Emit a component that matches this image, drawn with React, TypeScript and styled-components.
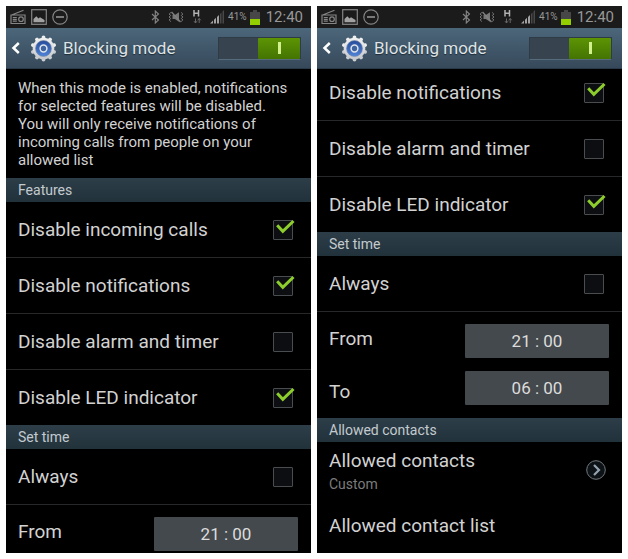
import React, { useState } from "react";
import styled, { createGlobalStyle } from "styled-components";

const GlobalStyle = createGlobalStyle`
  * { box-sizing: border-box; }
  body { margin: 0; background: #fff; font-family: Roboto, "Noto Sans", sans-serif; }
  button, input { font: inherit; color: inherit; }
`;

const Page = styled.main`
  display: grid;
  grid-template-columns: 1fr 1fr;
  gap: 6px;
  height: 100vh;
  padding: 6px;
`;

const Phone = styled.section`
  display: flex;
  flex-direction: column;
  min-width: 0;
  min-height: 0;
  overflow: hidden;
  background: #000;
  color: #d2d2d2;
`;

const StatusBar = styled.div`
  display: flex;
  flex: none;
  align-items: center;
  justify-content: space-between;
  height: 22px;
  padding: 0 8px 0 4px;
  background: #1b1b1b;
  color: #989898;
`;

const StatusGroup = styled.div<{ $gap: number }>`
  display: flex;
  align-items: center;
  gap: ${(p) => p.$gap}px;

  svg { display: block; }
`;

const Percent = styled.span`
  font-size: 10px;
  line-height: 16px;
`;

const Clock = styled.span`
  padding-left: 3px;
  font-size: 15px;
  line-height: 20px;
`;

const TitleBar = styled.header`
  display: flex;
  flex: none;
  align-items: center;
  height: 41px;
  padding: 0 10px 0 5px;
  background: linear-gradient(#4c667a, #36495a);
  border-bottom: 1px solid #2b3a48;
`;

const BackButton = styled.button`
  display: flex;
  align-items: center;
  gap: 10px;
  padding: 0;
  border: 0;
  background: none;
`;

const Title = styled.h1`
  flex: 1;
  margin: 0;
  padding-left: 6px;
  color: #dfe3e6;
  font-size: 17px;
  font-weight: 400;
  line-height: 24px;
  text-shadow: 0 1px 1px #1d2a35;
  white-space: nowrap;
`;

const Switch = styled.button<{ $on: boolean }>`
  display: flex;
  justify-content: ${(p) => (p.$on ? "flex-end" : "flex-start")};
  width: 83px;
  height: 23px;
  padding: 0;
  border: 1px solid #2f3b46;
  border-bottom-color: #566b7b;
  background: #37434e;
`;

const Knob = styled.span<{ $on: boolean }>`
  display: flex;
  align-items: center;
  justify-content: center;
  width: 42px;
  height: 100%;
  border-radius: 1px;
  background: ${(p) => (p.$on ? "linear-gradient(#5c9404, #447402)" : "#66717a")};

  &::before {
    width: 3px;
    height: 12px;
    background: #d3f08f;
    content: "";
  }
`;

const Body = styled.div<{ $scrolled: boolean }>`
  display: flex;
  flex: 1;
  flex-direction: column;
  justify-content: ${(p) => (p.$scrolled ? "flex-end" : "flex-start")};
  min-height: 0;
  overflow: hidden;

  > * { flex: none; }
`;

const Description = styled.p`
  margin: 0;
  padding: 10px 18px 9px 12px;
  font-size: 15px;
  line-height: 18px;
`;

const SectionTitle = styled.h2`
  height: 24px;
  margin: 0;
  padding: 0 12px;
  background: linear-gradient(#2e3e49, #22323b);
  color: #c3cace;
  font-size: 14px;
  font-weight: 400;
  line-height: 24px;
`;

const List = styled.div`
  > * + * { border-top: 1px solid #26282a; }
`;

const CheckRow = styled.label`
  display: flex;
  align-items: center;
  justify-content: space-between;
  min-height: 55px;
  padding: 0 18px 0 12px;
  font-size: 19px;
  line-height: 24px;

  & + & { min-height: 56px; }
`;

const CheckBox = styled.span`
  position: relative;
  display: flex;

  svg {
    position: absolute;
    top: -1px;
    left: 2px;
    pointer-events: none;
  }
`;

const CheckInput = styled.input`
  width: 20px;
  height: 20px;
  margin: 0;
  appearance: none;
  border: 1px solid #4a4d50;
  border-radius: 1px;
  background: #0c0e11;
`;

const TimeRow = styled.div<{ $last?: boolean }>`
  display: flex;
  align-items: center;
  justify-content: space-between;
  padding: 0 13px 0 12px;
  font-size: 19px;
  line-height: 24px;

  button { margin: ${(p) => (p.$last ? "5px 0 13px" : "12px 0 8px")}; }
`;

const TimeButton = styled.button`
  width: 144px;
  height: 34px;
  padding: 0;
  border: 0;
  border-radius: 1px;
  background: #44494d;
  color: #dcdcdc;
  font-size: 17px;
  line-height: 34px;
`;

const LinkRow = styled.button`
  display: flex;
  align-items: center;
  justify-content: space-between;
  width: 100%;
  min-height: 56px;
  padding: 0 16px 0 12px;
  border: 0;
  background: none;
  font-size: 19px;
  line-height: 24px;
  text-align: left;

  & + & { min-height: 55px; }
`;

const LinkText = styled.span`
  display: flex;
  flex-direction: column;
  padding-top: 4px;
`;

const Detail = styled.span`
  color: #7c7c7c;
  font-size: 14px;
  line-height: 22px;
`;

const TimeGroup = styled.div``;

function RadioIcon() {
  return (
    <svg width="16" height="16" viewBox="0 0 16 16" fill="none" stroke="#858585" strokeWidth="1.2">
      <path d="M1 6.2 13.5 1.2M1 6h14v8.5H1z" />
      <circle cx="11" cy="10.2" r="2.3" />
      <path d="M2.8 8.5h4M2.8 10.3h4M2.8 12.1h4" />
    </svg>
  );
}

function PictureIcon() {
  return (
    <svg width="16" height="16" viewBox="0 0 16 16">
      <rect x="0.7" y="0.7" width="14.6" height="14.6" fill="none" stroke="#858585" strokeWidth="1.2" />
      <path d="M2.5 13.3V10l2.8-2.8 2.2 2.2 1.5-1.2 4.5 2.8v2.3z" fill="#a2a2a2" />
    </svg>
  );
}

function BlockedIcon() {
  return (
    <svg width="16" height="16" viewBox="0 0 16 16" fill="none" stroke="#858585">
      <circle cx="8" cy="8" r="7.2" strokeWidth="1.2" />
      <path d="M4 8h8" strokeWidth="1.8" />
    </svg>
  );
}

function BluetoothIcon() {
  return (
    <svg width="9" height="14" viewBox="0 0 9 14" fill="none" stroke="#858585" strokeWidth="1.1">
      <path d="m1 4 6.5 6L4.3 13V1l3.2 3L1 10" />
    </svg>
  );
}

function VibrateIcon() {
  return (
    <svg width="16" height="12" viewBox="0 0 16 12" fill="none" stroke="#808080">
      <path d="M4.5 4h2.3L11 1.2v9.6L6.8 8H4.5z" fill="#777" stroke="none" />
      <path d="m3.5 1 9 10" strokeWidth="1.3" />
      <path d="M2.8 1.5 1.2 3l1.4 1.5L1.2 6l1.4 1.5L1.2 9l1.6 1.5M13.2 1.5 14.8 3l-1.4 1.5L14.8 6l-1.4 1.5L14.8 9l-1.6 1.5" />
    </svg>
  );
}

function DataIcon() {
  return (
    <svg width="10" height="16" viewBox="0 0 10 16" fill="none">
      <path d="M2 1v6.5M6.5 1v6.5M2 4.2h4.5" stroke="#b2b2b2" strokeWidth="1.5" />
      <path d="M3.5 9.5V14M2 12.2l1.5 1.8L5 12.2M7.2 14V9.5M5.7 11.3l1.5-1.8 1.5 1.8" stroke="#686868" />
    </svg>
  );
}

function SignalIcon() {
  return (
    <svg width="15" height="14" viewBox="0 0 15 14">
      <path d="M0 13.5 3 10.5v3zM4 9.7l2-2v5.8H4zM7 6.9l2-2v8.6H7z" fill="#a2a2a2" />
      <path d="m10 4 1.5-1.5v11H10zM12.5 1.5 14 0v13.5h-1.5z" fill="#484848" />
    </svg>
  );
}

function BatteryIcon() {
  return (
    <svg width="10" height="15" viewBox="0 0 10 15">
      <path d="M3 0h4v2h3v7H0V2h3z" fill="#474747" />
      <path d="M0 9h10v6H0z" fill="#93cf00" />
    </svg>
  );
}

function BackIcon() {
  return (
    <svg width="9" height="14" viewBox="0 0 9 14" fill="none" stroke="#fff" strokeWidth="2.5">
      <path d="M7.8 2 2.5 7l5.3 5" />
    </svg>
  );
}

const TEETH = Array.from({ length: 10 }, (_, i) => i * 36);

function GearIcon() {
  return (
    <svg width="27" height="27" viewBox="0 0 27 27">
      <defs>
        <linearGradient id="rim" x1="0" y1="0" x2="0" y2="1">
          <stop offset="0" stopColor="#f2f2f2" />
          <stop offset="1" stopColor="#c5c8cc" />
        </linearGradient>
        <linearGradient id="disc" x1="0" y1="0" x2="0" y2="1">
          <stop offset="0" stopColor="#274b9b" />
          <stop offset="1" stopColor="#4f84d8" />
        </linearGradient>
      </defs>
      {TEETH.map((angle) => (
        <path
          key={angle}
          d="m11.3 4 .7-3.1q1.5-.8 3 0l.7 3.1z"
          fill={angle > 90 && angle < 270 ? "#c9ccd0" : "#eeeeee"}
          transform={`rotate(${angle} 13.5 13.5)`}
        />
      ))}
      <circle cx="13.5" cy="13.5" r="10.8" fill="url(#rim)" />
      <circle cx="13.5" cy="13.5" r="8" fill="url(#disc)" stroke="#7d8da8" strokeWidth="0.6" />
      <circle cx="13.5" cy="13.5" r="3.4" fill="#3f639f" stroke="#dfe3e8" strokeWidth="1.5" />
    </svg>
  );
}

function CheckIcon() {
  return (
    <svg width="20" height="16" viewBox="0 0 20 16" fill="none" stroke="#8dcd2c" strokeWidth="3">
      <path d="m2.2 6.3 5.6 6L18.5 2" />
    </svg>
  );
}

function OpenIcon() {
  return (
    <svg width="20" height="20" viewBox="0 0 20 20" fill="none">
      <circle cx="10" cy="10" r="9.3" fill="#0d1216" stroke="#73787c" />
      <path d="m8 5 5 5-5 5" stroke="#94a3af" strokeWidth="2.2" />
    </svg>
  );
}

function CheckItem({ label, initial = false }: { label: string; initial?: boolean }) {
  const [checked, setChecked] = useState(initial);
  return (
    <CheckRow>
      {label}
      <CheckBox>
        <CheckInput type="checkbox" checked={checked} onChange={() => setChecked(!checked)} />
        {checked && <CheckIcon />}
      </CheckBox>
    </CheckRow>
  );
}

function TimeItem({ label, time, last }: { label: string; time: string; last?: boolean }) {
  return (
    <TimeRow $last={last}>
      <span>{label}</span>
      <TimeButton type="button" aria-label={`${label} ${time}`}>{time}</TimeButton>
    </TimeRow>
  );
}

function Screen({ scrolled = false, children }: { scrolled?: boolean; children: React.ReactNode }) {
  const [on, setOn] = useState(true);
  return (
    <Phone>
      <StatusBar>
        <StatusGroup $gap={5}>
          <RadioIcon />
          <PictureIcon />
          <BlockedIcon />
        </StatusGroup>
        <StatusGroup $gap={3}>
          <StatusGroup $gap={8}>
            <BluetoothIcon />
            <VibrateIcon />
            <DataIcon />
            <SignalIcon />
          </StatusGroup>
          <Percent>41%</Percent>
          <BatteryIcon />
          <Clock>12:40</Clock>
        </StatusGroup>
      </StatusBar>
      <TitleBar>
        <BackButton type="button" aria-label="Back">
          <BackIcon />
          <GearIcon />
        </BackButton>
        <Title>Blocking mode</Title>
        <Switch type="button" role="switch" aria-checked={on} aria-label="Blocking mode" $on={on} onClick={() => setOn(!on)}>
          <Knob $on={on} />
        </Switch>
      </TitleBar>
      <Body $scrolled={scrolled}>{children}</Body>
    </Phone>
  );
}

export default function App() {
  return (
    <>
      <GlobalStyle />
      <Page>
        <Screen>
          <Description>
            When this mode is enabled, notifications for selected features will be disabled. You will only
            receive notifications of incoming calls from people on your allowed list
          </Description>
          <SectionTitle>Features</SectionTitle>
          <List>
            <CheckItem label="Disable incoming calls" initial />
            <CheckItem label="Disable notifications" initial />
            <CheckItem label="Disable alarm and timer" />
            <CheckItem label="Disable LED indicator" initial />
          </List>
          <SectionTitle>Set time</SectionTitle>
          <List>
            <CheckItem label="Always" />
            <TimeGroup>
              <TimeItem label="From" time="21 : 00" />
            </TimeGroup>
          </List>
        </Screen>
        <Screen scrolled>
          <List>
            <CheckItem label="Disable notifications" initial />
            <CheckItem label="Disable alarm and timer" />
            <CheckItem label="Disable LED indicator" initial />
          </List>
          <SectionTitle>Set time</SectionTitle>
          <List>
            <CheckItem label="Always" />
            <TimeGroup>
              <TimeItem label="From" time="21 : 00" />
              <TimeItem label="To" time="06 : 00" last />
            </TimeGroup>
          </List>
          <SectionTitle>Allowed contacts</SectionTitle>
          <List>
            <LinkRow type="button">
              <LinkText>
                Allowed contacts
                <Detail>Custom</Detail>
              </LinkText>
              <OpenIcon />
            </LinkRow>
            <LinkRow type="button">Allowed contact list</LinkRow>
          </List>
        </Screen>
      </Page>
    </>
  );
}
